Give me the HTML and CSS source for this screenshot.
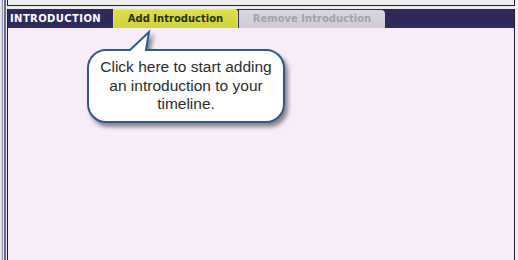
FILE: index.html
```html
<!DOCTYPE html>
<html>
<head>
<meta charset="utf-8">
<link rel="stylesheet" href="styles.css">
</head>
<body>
<div class="page">
  <div class="rail"></div>
  <div class="main">
    <div class="topbox"></div>
    <div class="section">
      <div class="header">
        <div class="title">INTRODUCTION</div>
        <div class="tab tab-add">Add Introduction</div>
        <div class="tab tab-remove">Remove Introduction</div>
      </div>
      <div class="content"></div>
    </div>
  </div>
  <div class="edge"></div>
</div>
<div class="callout">
  <svg class="bubble" width="230" height="112" viewBox="0 0 230 112">
    <path d="M 26 22 H 50 L 69 4 L 66 22 H 186 A 18 18 0 0 1 204 40 V 76 A 18 18 0 0 1 186 94 H 26 A 18 18 0 0 1 8 76 V 40 A 18 18 0 0 1 26 22 Z" fill="#ffffff" stroke="#2d5a8c" stroke-width="2"/>
  </svg>
  <div class="callout-text">Click here to start adding<br>an introduction to your<br>timeline.</div>
</div>
</body>
</html>
```
FILE: styles.css
```css
html, body {
  margin: 0;
  padding: 0;
}
body {
  width: 518px;
  height: 260px;
  overflow: hidden;
  background: #ecebee;
  position: relative;
}
.page {
  display: flex;
  height: 260px;
}
.rail {
  width: 7px;
  flex: none;
  background: linear-gradient(to right,
    #e4e4e8 0, #e4e4e8 2px,
    #8c8ca4 2px, #8c8ca4 3px,
    #e8e8ee 3px, #e8e8ee 4px,
    #6c6c94 4px, #6c6c94 6px,
    #e8e8ee 6px, #e8e8ee 7px);
}
.main {
  width: 508px;
  flex: none;
  display: flex;
  flex-direction: column;
}
.topbox {
  height: 5px;
  border-left: 1px solid #20203a;
  border-right: 1px solid #20203a;
  border-bottom: 1px solid #20203a;
  background: #eeeef0;
  margin-bottom: 3px;
}
.section {
  flex: 1;
  display: flex;
  flex-direction: column;
  border-left: 1px solid #1c1c34;
  border-right: 1px solid #1c1c34;
}
.header {
  height: 19px;
  background: #2e2a5c;
  display: flex;
  align-items: flex-end;
}
.title {
  align-self: center;
  color: #ffffff;
  font-family: "DejaVu Sans", Verdana, sans-serif;
  font-weight: bold;
  font-size: 10px;
  letter-spacing: 0.4px;
  padding-left: 2px;
  width: 103px;
}
.tab {
  font-family: "DejaVu Sans", Verdana, sans-serif;
  font-weight: bold;
  font-size: 10px;
  text-align: center;
  box-sizing: border-box;
}
.tab-add {
  width: 125px;
  height: 20px;
  line-height: 18px;
  background: linear-gradient(#dede4a, #d2d23a);
  border: 1px solid #f2f21a;
  border-top-right-radius: 3px;
  color: #1e3214;
  margin-bottom: -1px;
}
.tab-remove {
  margin-left: 1px;
  width: 146px;
  height: 18px;
  line-height: 18px;
  background: linear-gradient(#dcd8e2, #cecad6);
  border-top-right-radius: 4px;
  color: #a2a2aa;
}
.content {
  flex: 1;
  background: #f8ecf8;
}
.edge {
  flex: 1;
  background: #f2eef4;
}
.callout {
  position: absolute;
  left: 80px;
  top: 28px;
  width: 230px;
  height: 112px;
}
.bubble {
  display: block;
  filter: drop-shadow(3px 4px 2px rgba(0, 0, 0, 0.45));
}
.callout-text {
  position: absolute;
  left: 8px;
  top: 30px;
  width: 196px;
  text-align: center;
  font-family: "Liberation Sans", Arial, sans-serif;
  font-size: 15.5px;
  line-height: 18.5px;
  color: #2c2c2c;
}
```
